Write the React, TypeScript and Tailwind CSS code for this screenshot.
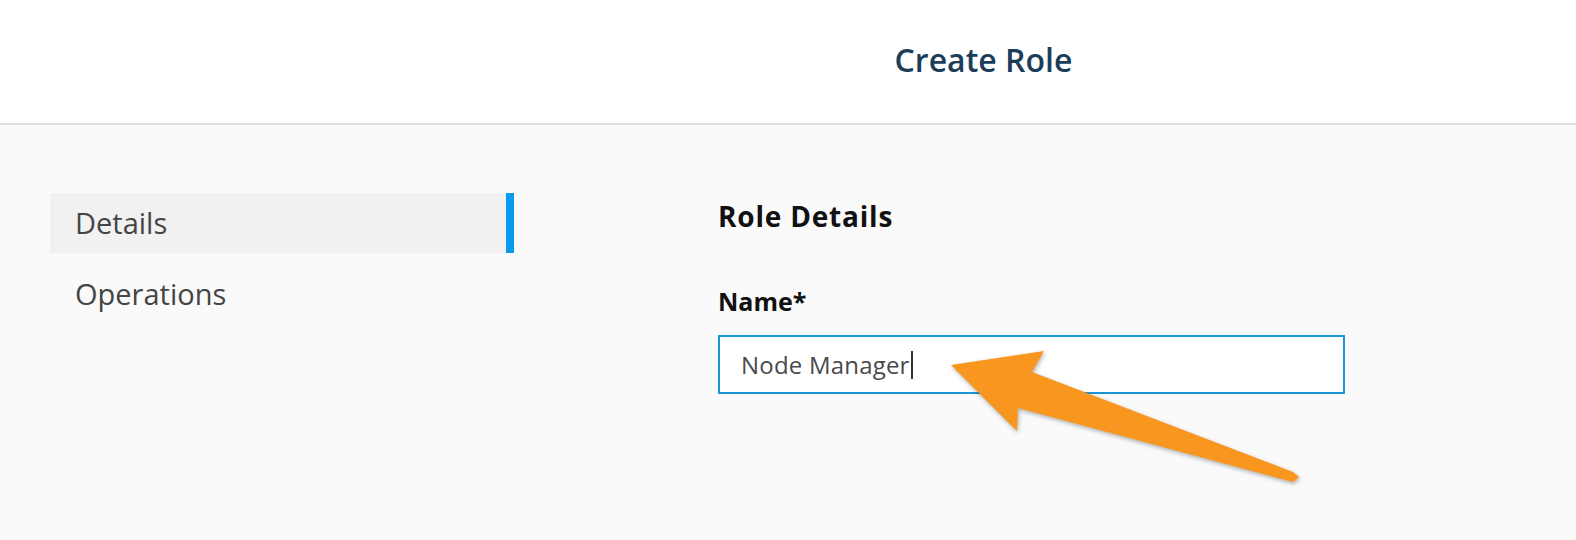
const navItems = [
  { label: "Details", active: true },
  { label: "Operations", active: false },
];

const Arrow = () => (
  <svg
    className="pointer-events-none absolute left-0 top-0"
    width="1576"
    height="540"
    viewBox="0 0 1576 540"
  >
    <polygon
      points="951,365 1044,351 1032,372 1293,472 1299,477 1293,482 1018,408 1017,431"
      fill="#f8961f"
      style={{ filter: "drop-shadow(1px 2px 2px rgba(0,0,0,0.3))" }}
      strokeLinejoin="round"
    />
  </svg>
);

const App = () => (
  <div className="relative h-[540px] w-[1576px] overflow-hidden bg-[#fafafa] font-['Open_Sans',sans-serif]">
    {/* Header */}
    <header className="flex h-[125px] justify-center border-b-2 border-[#e2e2e2] bg-white pl-[391px] pt-[41px]">
      <h1 className="text-[32px] font-semibold leading-[38px] text-[#1c3d5a]">Create Role</h1>
    </header>

    <div className="flex">
      {/* Side navigation */}
      <nav className="ml-[50px] mt-[68px] flex w-[464px] flex-col gap-[11px]">
        {navItems.map((item) => (
          <div
            key={item.label}
            className={
              item.active
                ? "flex h-[60px] items-center border-r-8 border-[#0b9bee] bg-[#f1f1f1] pl-[25px] text-[29px] text-[#454545]"
                : "flex h-[60px] items-center pl-[25px] text-[29px] text-[#454545]"
            }
          >
            {item.label}
          </div>
        ))}
      </nav>

      {/* Form */}
      <section className="ml-[204px] mt-[74px] w-[627px]">
        <h2 className="text-[28px] font-bold leading-[34px] tracking-[0.8px] text-[#111]">Role Details</h2>
        <label className="mt-[52px] block text-[25px] font-bold leading-[32px] text-[#111]">Name*</label>
        <div className="mt-[18px] flex h-[59px] items-center border-2 border-[#1b94d8] bg-white pl-[21px] text-[24px] tracking-[0.2px] text-[#4a4a4a]">
          <span>Node Manager</span>
          <span className="ml-[1px] h-[28px] w-[2px] bg-[#333]" />
        </div>
      </section>
    </div>

    <Arrow />
  </div>
);

export default App;
